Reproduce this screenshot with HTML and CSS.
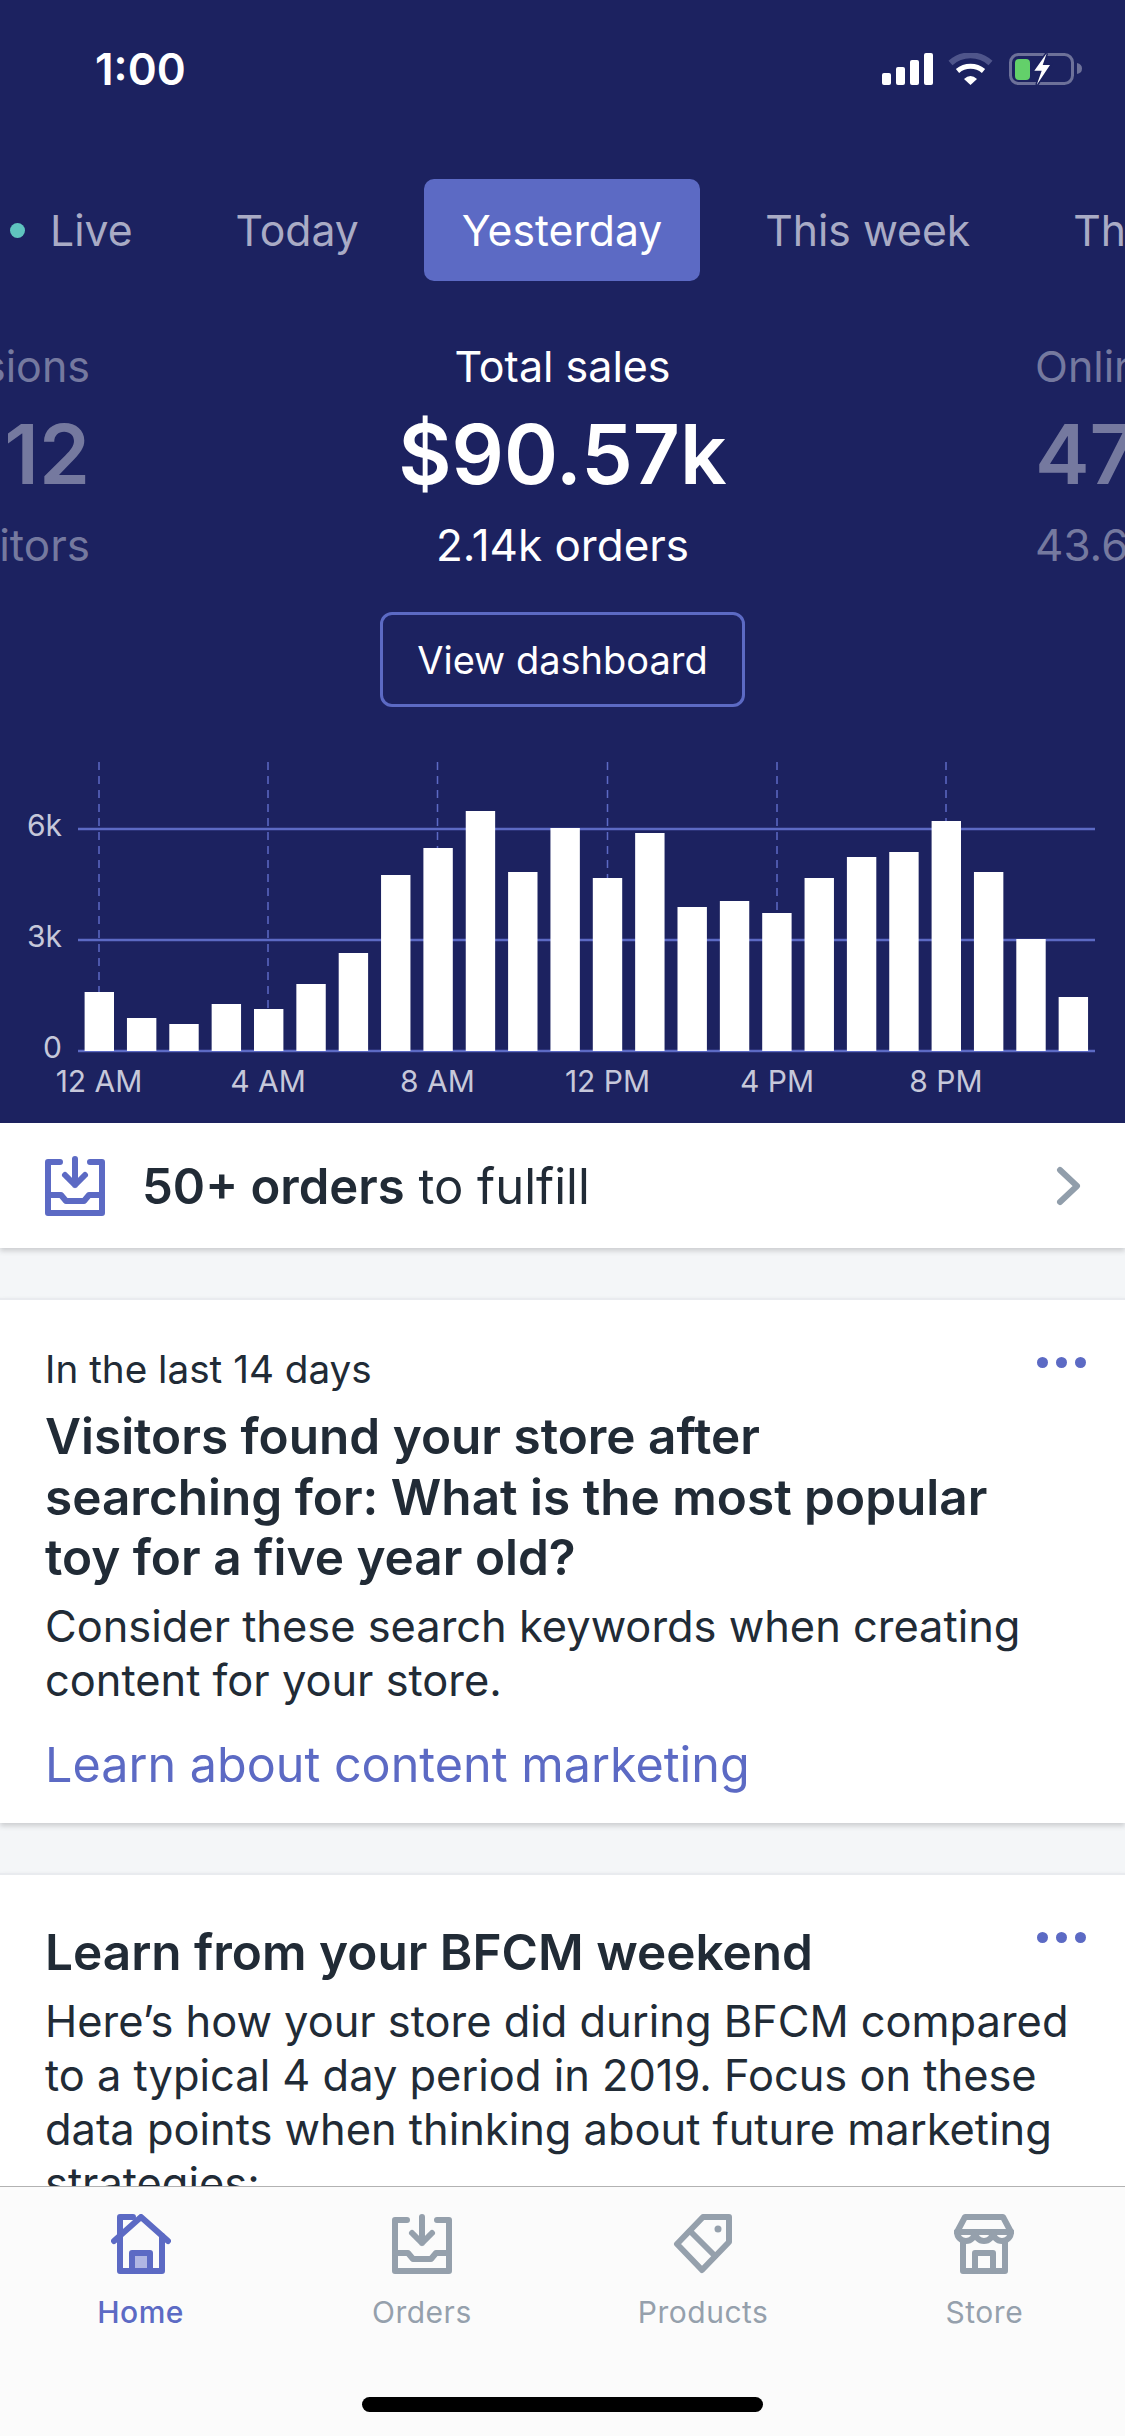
FILE: index.html
```html
<!DOCTYPE html>
<html lang="en">
  <head>
    <meta charset="UTF-8" />
    <meta name="viewport" content="width=device-width, initial-scale=1.0" />
    <title>Home</title>
    <link rel="stylesheet" href="styles.css">
  </head>
  <body>
    <div class="screen">
      <div class="content">
        <header class="hero">
          <div class="status-bar">
            <span class="status-time">1:00</span>
            <svg class="status-icons" width="200" height="32" viewBox="0 0 200 32">
              <rect x="0" y="20" width="9" height="12" rx="2" fill="#fff" />
              <rect x="14" y="14" width="9" height="18" rx="2" fill="#fff" />
              <rect x="28" y="7" width="9" height="25" rx="2" fill="#fff" />
              <rect x="42" y="0" width="9" height="32" rx="2" fill="#fff" />
              <path d="M68.5 10 A30 30 0 0 1 108.5 10" fill="none" stroke="#4f558b" stroke-width="6" />
              <path d="M75.5 18 A20 20 0 0 1 101.5 18" fill="none" stroke="#fff" stroke-width="5" />
              <path d="M82 26 Q88.5 20 95 26 L88.5 32 Z" fill="#fff" />
              <rect x="128.5" y="1.5" width="62" height="29" rx="8" fill="none" stroke="#6d7199" stroke-width="3" />
              <rect x="133" y="6" width="15" height="21" rx="4" fill="#63d06a" />
              <path d="M195 10 Q200 11 200 15.5 Q200 20 195 21 Z" fill="#6d7199" />
              <path d="M164.7 0.3 L152.3 17.7 H159.7 L154.7 32 L168 12 H160.7 Z" fill="#fff" stroke="#1c2260" stroke-width="3" paint-order="stroke" />
            </svg>
          </div>

          <nav class="range-tabs">
            <span class="range-tab range-tab-live"><i class="live-dot"></i>Live</span>
            <span class="range-tab">Today</span>
            <span class="range-tab range-tab-active">Yesterday</span>
            <span class="range-tab">This week</span>
            <span class="range-tab">This month</span>
          </nav>

          <div class="stats">
            <div class="stat stat-left">
              <div class="stat-label">Sessions</div>
              <div class="stat-value">12</div>
              <div class="stat-sub">visitors</div>
            </div>
            <div class="stat stat-main">
              <div class="stat-label">Total sales</div>
              <div class="stat-value">$90.57k</div>
              <div class="stat-sub">2.14k orders</div>
              <button class="dashboard-button">View dashboard</button>
            </div>
            <div class="stat stat-right">
              <div class="stat-label">Online</div>
              <div class="stat-value">47</div>
              <div class="stat-sub">43.6</div>
            </div>
          </div>

          <svg class="chart" id="chart" width="1125" height="383" viewBox="0 0 1125 383"></svg>
        </header>

        <a class="fulfill-row">
          <svg class="fulfill-icon" width="60" height="60" viewBox="0 0 60 60">
            <use href="#icon-orders" />
          </svg>
          <span class="fulfill-text"><b>50+ orders</b> to fulfill</span>
          <svg class="chevron" width="26" height="40" viewBox="0 0 26 40">
            <path d="M4 4 L21 20 L4 36" fill="none" stroke="#919eab" stroke-width="6" stroke-linecap="round" stroke-linejoin="round" />
          </svg>
        </a>

        <section class="card card-first">
          <div class="card-menu"><i></i><i></i><i></i></div>
          <p class="card-eyebrow">In the last 14 days</p>
          <h2 class="card-title">Visitors found your store after searching for: What is the most popular toy for a five year old?</h2>
          <p class="card-body">Consider these search keywords when creating content for your store.</p>
          <a class="card-link">Learn about content marketing</a>
        </section>

        <section class="card card-second">
          <div class="card-menu"><i></i><i></i><i></i></div>
          <h2 class="card-title">Learn from your BFCM weekend</h2>
          <p class="card-body">Here’s how your store did during BFCM compared to a typical 4 day period in 2019. Focus on these data points when thinking about future marketing strategies:</p>
        </section>
      </div>

      <nav class="tab-bar">
        <div class="tab tab-active">
          <svg width="60" height="60" viewBox="0 0 60 60">
            <rect x="24" y="42" width="12" height="12" fill="#b0b6e3" />
            <g class="icon-stroke">
              <path d="M3 27 L30 3 L57 27" />
              <path d="M9 22 V57 H51 V22" />
              <path d="M21 57 V39 H39 V57" />
              <path d="M9 22 V3 H22" />
            </g>
          </svg>
          <span>Home</span>
        </div>
        <div class="tab">
          <svg width="60" height="60" viewBox="0 0 60 60">
            <g id="icon-orders" class="icon-stroke">
              <path d="M15 6 H3 V57 H57 V6 H45" />
              <path d="M3 39 H16 L21 45 H39 L44 39 H57" />
              <path d="M30 3 V29 M20 19 L30 29 L40 19" />
            </g>
          </svg>
          <span>Orders</span>
        </div>
        <div class="tab">
          <svg width="60" height="60" viewBox="0 0 60 60">
            <g class="icon-stroke">
              <path d="M30 3 H56 V28 L29 56 L4 30 Z" />
              <path d="M17 17 L42 42" />
            </g>
            <circle cx="45" cy="15" r="3.5" fill="currentColor" />
          </svg>
          <span>Products</span>
        </div>
        <div class="tab">
          <svg width="60" height="60" viewBox="0 0 60 60">
            <g class="icon-stroke">
              <path d="M3 18 L11 3 H49 L57 18" />
              <path d="M3 18 H57" />
              <path d="M3 18 A9 9 0 0 0 21 18 A9 9 0 0 0 39 18 A9 9 0 0 0 57 18" />
              <path d="M9 27 V57 H51 V27" />
              <path d="M21 57 V39 H39 V57" />
            </g>
          </svg>
          <span>Store</span>
        </div>
        <div class="home-indicator"></div>
      </nav>
    </div>
    <script>
      // Hourly sales, heights in px above the baseline
      const bars = [59, 33, 27, 47, 42, 67, 98, 176, 203, 240, 179, 223, 173, 218, 144, 150, 138, 173, 194, 199, 230, 179, 112, 54];
      const hours = [["12 AM", 99], ["4 AM", 268], ["8 AM", 437.5], ["12 PM", 607.5], ["4 PM", 777], ["8 PM", 946]];
      const baseline = 311;
      let chart = "";

      hours.forEach(function (h) {
        chart += `<line class="chart-tick" x1="${h[1]}" x2="${h[1]}" y1="22" y2="${baseline}" />`;
        chart += `<text class="chart-label" x="${h[1]}" y="352" text-anchor="middle">${h[0]}</text>`;
      });
      [[89, "6k"], [200, "3k"], [311, "0"]].forEach(function (g) {
        chart += `<line class="chart-grid" x1="78" x2="1095" y1="${g[0]}" y2="${g[0]}" />`;
        chart += `<text class="chart-label" x="62" y="${g[0] + 7}" text-anchor="end">${g[1]}</text>`;
      });
      bars.forEach(function (h, i) {
        const x = 84.6 + i * 42.35;
        chart += `<rect class="chart-bar" x="${x}" y="${baseline - h}" width="29.4" height="${h}" />`;
      });
      document.getElementById("chart").innerHTML = chart;
    </script>
  </body>
</html>
```

FILE: styles.css
```css
* {
  box-sizing: border-box;
}
body {
  margin: 0;
  font-family: Inter, "Noto Sans", sans-serif;
  color: #212b36;
  background-color: #f4f6f8;
}
p,
h2 {
  margin: 0;
}
.screen {
  width: 1125px;
  height: 2436px;
  display: flex;
  flex-direction: column;
  overflow: hidden;
}
.content {
  flex: 1;
  min-height: 0;
  overflow: hidden;
}

/* Dark top section */
.hero {
  height: 1123px;
  background-color: #1c2260;
  color: white;
  overflow: hidden;
}
.status-bar {
  height: 179px;
  display: flex;
  justify-content: space-between;
  align-items: flex-start;
  padding: 43px 43px 0 95px;
}
.status-time {
  font-size: 44px;
  line-height: 52px;
  font-weight: 600;
}
.status-icons {
  margin-top: 10px;
}
.range-tabs {
  display: flex;
  gap: 27px;
  margin-left: -28px;
  width: 1153px;
  overflow: hidden;
}
.range-tab {
  flex-shrink: 0;
  display: flex;
  align-items: center;
  height: 102px;
  padding: 0 38px;
  font-size: 42.7px;
  color: #a9abc5;
  border-radius: 10px;
}
.range-tab-active {
  background-color: #5c6ac4;
  color: white;
}
.live-dot {
  width: 15px;
  height: 15px;
  margin-right: 25px;
  border-radius: 50%;
  background-color: #5fc4bf;
}
.stats {
  display: grid;
  grid-template-columns: 90px 945px 90px;
  height: 459px;
  padding-top: 60px;
}
.stat {
  display: flex;
  flex-direction: column;
  align-items: center;
  color: #75799f;
  white-space: nowrap;
  min-width: 0;
}
.stat-left {
  align-items: flex-end;
}
.stat-right {
  align-items: flex-start;
}
.stat-main {
  color: white;
}
.stat-label {
  font-size: 43px;
  line-height: 50px;
}
.stat-value {
  font-size: 82px;
  line-height: 100px;
  margin-top: 14px;
  font-weight: 600;
}
.stat-sub {
  font-size: 44px;
  line-height: 50px;
  margin-top: 15px;
}
.dashboard-button {
  width: 365px;
  height: 95px;
  margin-top: 42px;
  background: none;
  border: 3px solid #5c6ac4;
  border-radius: 12px;
  color: white;
  font-family: inherit;
  font-size: 38px;
}
.chart {
  display: block;
}
.chart-grid {
  stroke: #5c6ac4;
  stroke-width: 2.5;
}
.chart-tick {
  stroke: #5c6ac4;
  stroke-width: 1.5;
  stroke-dasharray: 8 6;
}
.chart-bar {
  fill: white;
}
.chart-label {
  fill: #c6c8da;
  font-size: 30px;
}

/* Orders row */
.fulfill-row {
  display: flex;
  align-items: center;
  height: 125px;
  padding: 0 43px 0 45px;
  background-color: white;
  box-shadow: 0 3px 5px rgba(63, 63, 68, 0.22);
  position: relative;
}
.fulfill-icon {
  color: #5c6ac4;
}
.fulfill-text {
  flex: 1;
  margin: 2px 0 0 37px;
  font-size: 49px;
}
.fulfill-text b {
  font-weight: 600;
}

/* Cards */
.card {
  position: relative;
  padding: 45px 45px 0;
  background-color: white;
  border-top: 2px solid #e9ebef;
  box-shadow: 0 3px 5px rgba(63, 63, 68, 0.22);
}
.card-first {
  margin-top: 50px;
  height: 525px;
}
.card-second {
  margin-top: 50px;
  height: 600px;
  padding-top: 47px;
}
.card-menu {
  position: absolute;
  top: 57px;
  right: 39px;
  display: flex;
  gap: 8px;
}
.card-menu i {
  width: 11px;
  height: 11px;
  border-radius: 50%;
  background-color: #5c6ac4;
}
.card-eyebrow {
  font-size: 38.7px;
  line-height: 48px;
  margin-bottom: 13px;
}
.card-title {
  max-width: 950px;
  font-size: 49.5px;
  line-height: 60.5px;
  font-weight: 600;
}
.card-body {
  margin-top: 11px;
  font-size: 43.4px;
  line-height: 54.3px;
}
.card-link {
  display: block;
  margin-top: 28px;
  color: #5c6ac4;
  font-size: 48.5px;
  line-height: 60px;
}

/* Bottom navigation */
.tab-bar {
  flex-shrink: 0;
  position: relative;
  height: 250px;
  display: grid;
  grid-template-columns: repeat(4, 1fr);
  align-items: start;
  padding-top: 27px;
  background-color: #fbfbfb;
  border-top: 1px solid #b2b2b2;
}
.tab {
  display: flex;
  flex-direction: column;
  align-items: center;
  color: #95a0ac;
  font-size: 30px;
  letter-spacing: 0.5px;
}
.tab span {
  margin-top: 18px;
  line-height: 40px;
}
.tab-active {
  color: #5c6ac4;
  font-weight: 500;
}
.icon-stroke {
  fill: none;
  stroke: currentColor;
  stroke-width: 6;
  stroke-linecap: round;
  stroke-linejoin: round;
}
.home-indicator {
  position: absolute;
  left: 362px;
  bottom: 24px;
  width: 401px;
  height: 15px;
  border-radius: 8px;
  background-color: black;
}
```
